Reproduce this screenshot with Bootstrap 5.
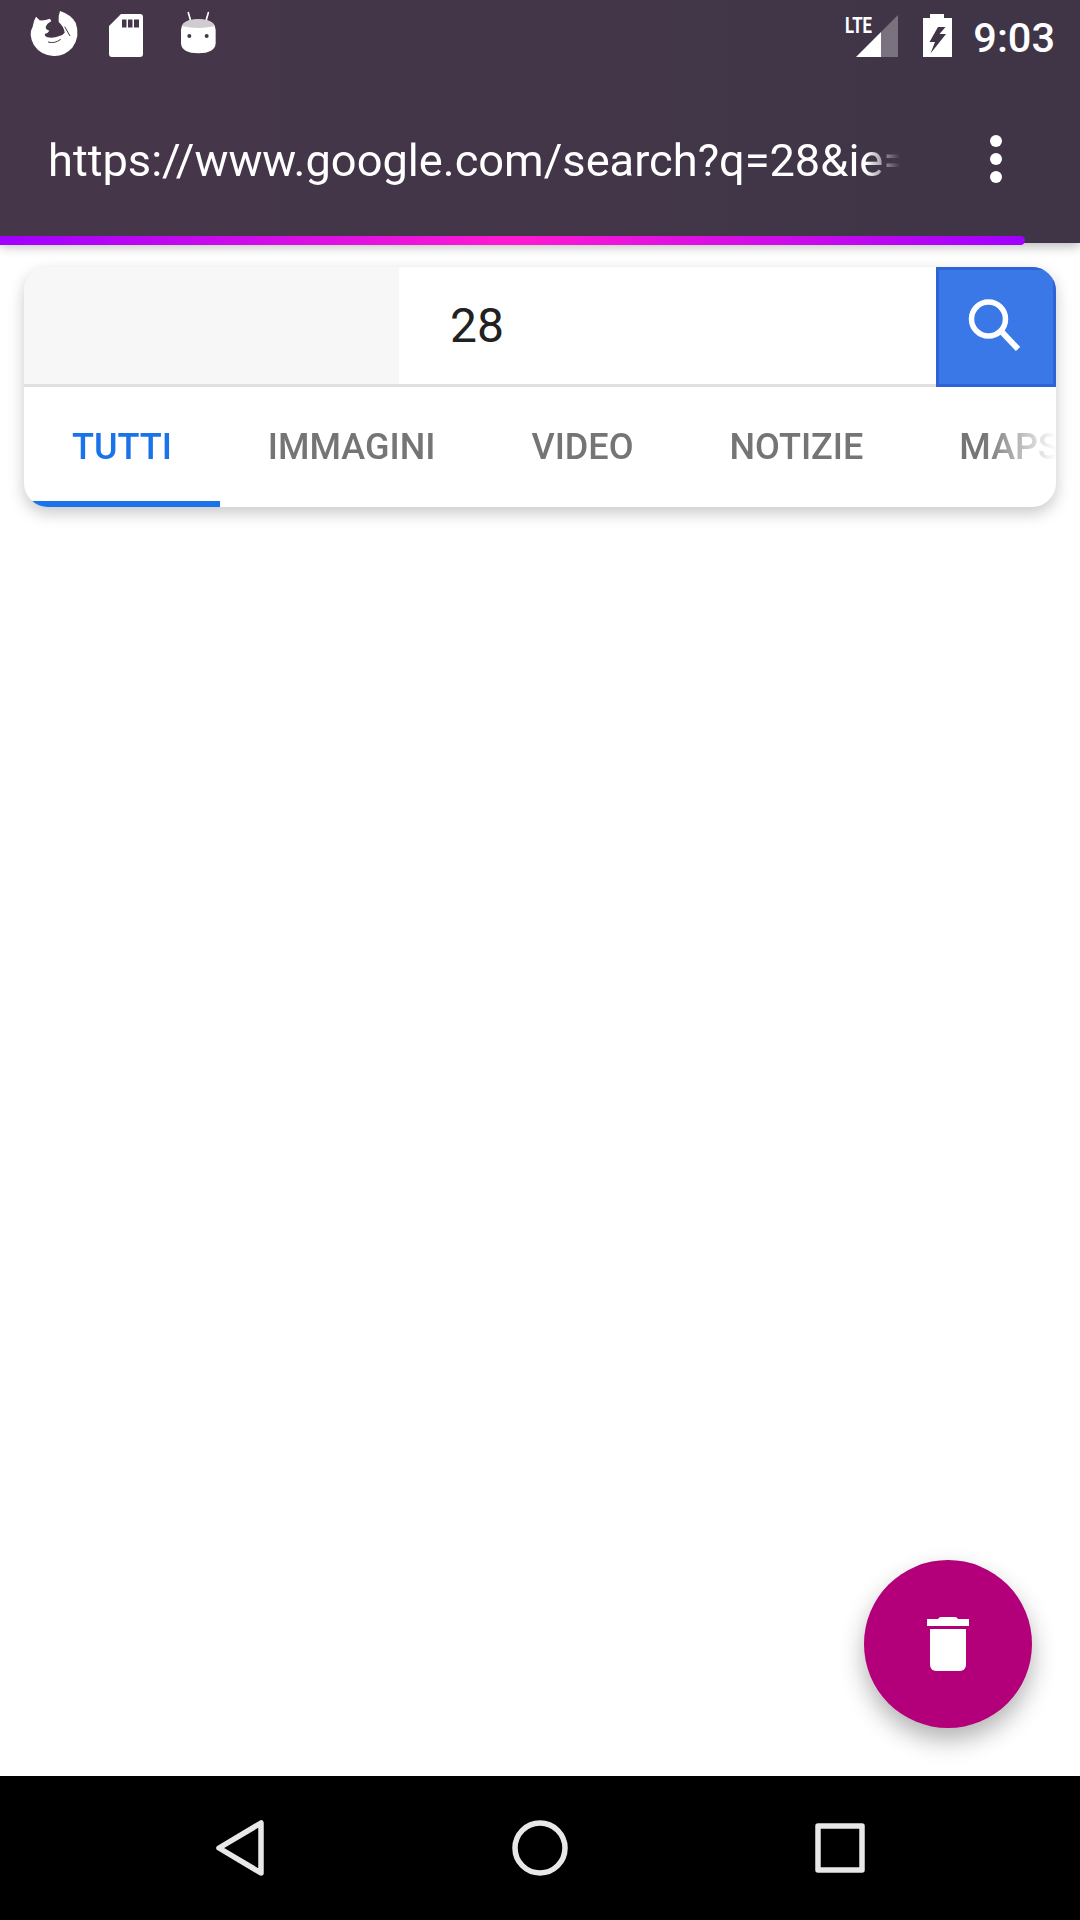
<!DOCTYPE html>
<html lang="en">
<head>
    <meta charset="UTF-8">
    <title>Search</title>
    <meta name="viewport" content="width=device-width, initial-scale=1">
    <link href="https://cdn.jsdelivr.net/npm/bootstrap@5.3.3/dist/css/bootstrap.min.css" rel="stylesheet">
    <style>
        body {
            font-family: Roboto, "Liberation Sans", sans-serif;
            background: #fff;
            overflow: hidden;
        }
        .app-header {
            height: 243px;
            background: linear-gradient(90deg, #46364a, #3f3547);
            box-shadow: 0 4px 10px rgba(0,0,0,0.25);
            z-index: 2;
        }
        .status-row {
            height: 60px;
            margin-top: 6px;
            padding: 0 25px 0 24px;
        }
        .gap-sd { margin-left: 25px; }
        .gap-bot { margin-left: 32px; }
        .gap-batt { margin-left: 25px; }
        .clock {
            font-size: 41.5px;
            font-weight: 500;
            line-height: 60px;
            margin-left: 21px;
            margin-top: 3px;
            color: #fff;
        }
        .url-row {
            height: 90px;
            margin-top: 48px;
            padding-left: 48px;
        }
        .url-text {
            width: 852px;
            font-size: 45.2px;
            line-height: 90px;
            padding-top: 4px;
            color: #fff;
            white-space: nowrap;
            overflow: hidden;
            -webkit-mask-image: linear-gradient(90deg, #000 96%, transparent);
            mask-image: linear-gradient(90deg, #000 96%, transparent);
        }
        .dots {
            margin-left: 78px;
        }
        .load-bar {
            left: 0;
            top: 236px;
            width: 1025px;
            height: 9px;
            border-radius: 0 5px 5px 0;
            background: linear-gradient(90deg, #a000ff, #ff1ad0 50%, #a000ff);
            z-index: 3;
        }
        .search-box {
            margin: 24px 24px 0;
            border: 0;
            border-radius: 24px;
            overflow: hidden;
            box-shadow: 0 6px 16px rgba(0,0,0,0.22);
        }
        .search-row {
            height: 120px;
        }
        .search-side {
            width: 375px;
            background: #f7f7f7;
            border-bottom: 3px solid #e0e0e0;
        }
        .search-input,
        .search-input:focus {
            font-size: 48px;
            color: #212121;
            padding: 0 0 0 51px;
            border: 0;
            border-bottom: 3px solid #e0e0e0;
            border-radius: 0;
            box-shadow: none;
        }
        .search-btn {
            width: 120px;
            height: 120px;
            padding: 0;
            background: #3b78e7;
            border: 3px solid #2f62d6;
            border-radius: 0;
        }
        .tab-row {
            height: 120px;
            flex-wrap: nowrap;
            overflow: hidden;
            -webkit-mask-image: linear-gradient(90deg, #000 93%, transparent 100%);
            mask-image: linear-gradient(90deg, #000 93%, transparent 100%);
        }
        .tab-link {
            height: 120px;
            padding: 0 48px;
            font-size: 36px;
            font-weight: 500;
            line-height: 120px;
            color: #757575;
            white-space: nowrap;
        }
        .tab-link.active {
            color: #1a73e8;
            box-shadow: inset 0 -6px 0 #1a73e8;
        }
        .fab-trash {
            right: 48px;
            bottom: 192px;
            width: 168px;
            height: 168px;
            padding: 0;
            border: 0;
            background: #b3007a;
            box-shadow: 0 12px 24px rgba(0,0,0,0.3);
        }
        .fab-trash:hover { background: #b3007a; }
        .sys-nav {
            height: 144px;
            padding: 0 90px;
            background: #000;
        }
        .sys-nav > div { width: 300px; }
    </style>
</head>
<body>
    <div class="d-flex flex-column vh-100 position-relative">
        <header class="app-header position-relative d-flex flex-column flex-shrink-0">
            <div class="status-row d-flex align-items-center">
                <svg width="60" height="60" viewBox="0 0 180 180" fill="#fff">
                    <path d="M36 32 L47 43 Q60 45 78 38 L82 46 Q68 52 65 64 Q66 72 76 74 Q72 82 62 84 Q62 92 70 94 Q88 98 106 90 Q116 88 122 80 Q120 62 104 48 Q102 30 108 15 Q140 25 155 50 Q170 90 145 125 Q120 152 88 150 Q50 148 30 118 Q12 85 26 62 Q28 45 36 32Z"/>
                    <path d="M122 62L138 90M72 108Q92 114 110 100" stroke="#46364a" stroke-width="3" fill="none"/>
                </svg>
                <svg class="gap-sd" width="34" height="60" viewBox="0 0 34 60" fill="#fff" fill-rule="evenodd">
                    <path d="M12 8H31a3 3 0 0 1 3 3V48a3 3 0 0 1-3 3H3a3 3 0 0 1-3-3V20Z M13 13.500V21.500H17.500V13.500Z M19 13.500V21.500H23.500V13.500Z M25 13.500V21.500H30V13.500Z"/>
                </svg>
                <svg class="gap-bot" width="50" height="60" viewBox="0 0 150 180">
                    <path d="M40 20L47 44M100 20L93 44" stroke="#fff" stroke-width="5" stroke-linecap="round"/>
                    <path d="M18 72 Q20 40 70 40 Q120 40 122 72 L122 112 Q120 142 70 142 Q20 142 18 112Z" fill="#fff"/>
                    <path d="M20 60 Q28 40 70 40 Q112 40 120 60 Q70 72 20 60Z" fill="#cfcbd0"/>
                    <circle cx="43" cy="90" r="6" fill="#46364a"/>
                    <circle cx="95" cy="90" r="6" fill="#46364a"/>
                </svg>
                <div class="ms-auto d-flex align-items-center">
                    <svg width="53" height="60" viewBox="0 0 53 60">
                        <text x="0" y="27" fill="#fff" font-family="Roboto, sans-serif" font-weight="700" font-size="22" textLength="27" lengthAdjust="spacingAndGlyphs">LTE</text>
                        <path d="M36 26L53 9V51H36Z" fill="#fff" fill-opacity="0.3"/>
                        <path d="M11 51L36 26V51Z" fill="#fff"/>
                    </svg>
                    <svg class="gap-batt" width="29" height="60" viewBox="0 0 29 60" fill="#fff" fill-rule="evenodd">
                        <path d="M7 8H21V12H29V51H0V12H7Z M15 21L6.500 36H12L7.500 47.500L23 28H16.500L22.500 21Z"/>
                    </svg>
                    <span class="clock">9:03</span>
                </div>
            </div>
            <div class="url-row d-flex align-items-center">
                <div class="url-text">https://www.google.com/search?q=28&amp;ie=UTF-8</div>
                <svg class="dots" width="36" height="60" viewBox="0 0 36 60" fill="#fff">
                    <circle cx="18" cy="12" r="6"/>
                    <circle cx="18" cy="30" r="6"/>
                    <circle cx="18" cy="48" r="6"/>
                </svg>
            </div>
        </header>
        <div class="load-bar position-absolute"></div>

        <main class="flex-grow-1">
            <div class="card search-box">
                <div class="search-row d-flex">
                    <div class="search-side flex-shrink-0"></div>
                    <input type="text" class="form-control search-input flex-grow-1" value="28">
                    <button class="btn search-btn flex-shrink-0 d-flex align-items-center justify-content-center" aria-label="Search">
                        <svg width="60" height="60" viewBox="0 0 60 60" fill="none" stroke="#fff">
                            <circle cx="22.500" cy="22" r="17" stroke-width="5.500"/>
                            <path d="M35 34L52 52" stroke-width="6"/>
                        </svg>
                    </button>
                </div>
                <nav class="nav tab-row">
                    <a class="nav-link tab-link active" href="#">TUTTI</a>
                    <a class="nav-link tab-link" href="#">IMMAGINI</a>
                    <a class="nav-link tab-link" href="#">VIDEO</a>
                    <a class="nav-link tab-link" href="#">NOTIZIE</a>
                    <a class="nav-link tab-link" href="#">MAPS</a>
                </nav>
            </div>
        </main>

        <button class="btn fab-trash rounded-circle position-absolute d-flex align-items-center justify-content-center" aria-label="Delete">
            <svg width="42" height="54" viewBox="0 0 42 54" fill="#fff">
                <path d="M0 2H11Q12 0 14 0H28Q30 0 31 2H42V9H0Z"/>
                <path d="M3 12H39V48a6 6 0 0 1-6 6H9a6 6 0 0 1-6-6Z"/>
            </svg>
        </button>

        <footer class="sys-nav d-flex align-items-center flex-shrink-0">
            <div class="d-flex justify-content-center">
                <svg width="48" height="56" viewBox="0 0 48 56" fill="none" stroke="#e8e8e8" stroke-width="5.500" stroke-linejoin="round">
                    <path d="M45 3V53L3 28Z"/>
                </svg>
            </div>
            <div class="d-flex justify-content-center">
                <svg width="56" height="56" viewBox="0 0 56 56" fill="none" stroke="#e8e8e8" stroke-width="5.500">
                    <circle cx="28" cy="28" r="25"/>
                </svg>
            </div>
            <div class="d-flex justify-content-center">
                <svg width="50" height="50" viewBox="0 0 50 50" fill="none" stroke="#e8e8e8" stroke-width="5.500" stroke-linejoin="round">
                    <rect x="3" y="3" width="44" height="44"/>
                </svg>
            </div>
        </footer>
    </div>

    <script src="https://cdn.jsdelivr.net/npm/bootstrap@5.3.3/dist/js/bootstrap.bundle.min.js"></script>
</body>
</html>
